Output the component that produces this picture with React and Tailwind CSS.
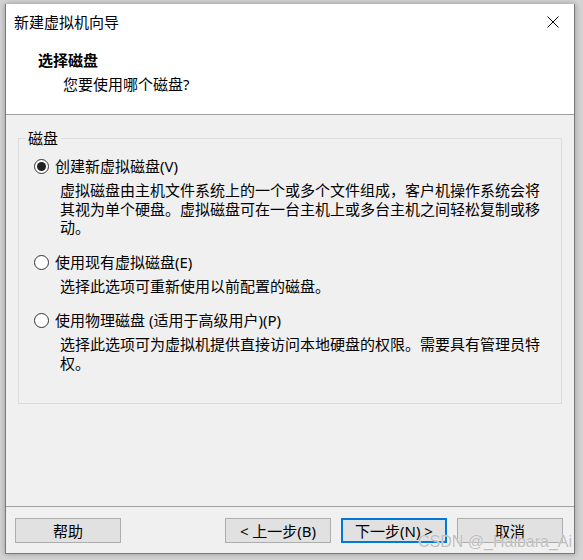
import React from "react";

const FONT = { fontFamily: "'Noto Sans', 'Noto Sans CJK SC', sans-serif" };

const Radio = ({ checked }) => (
    <span className="w-[15px] h-[15px] rounded-full border border-[#333333] bg-white flex items-center justify-center flex-shrink-0">
        {checked && <span className="w-[9px] h-[9px] rounded-full bg-[#222222]" />}
    </span>
);

const Option = ({ checked, label, desc }) => (
    <div className="flex flex-col">
        <div className="flex items-center h-[19px] leading-[19px]">
            <Radio checked={checked} />
            <span className="ml-[6px]">{label}</span>
        </div>
        <p className="pl-[26px] mt-[5px] w-[512px] leading-[18.5px]">{desc}</p>
    </div>
);

const Button = ({ children, focused }) => (
    <button
        className={
            focused
                ? "w-[106px] h-[25px] border-2 border-[#0078d7] bg-[#e1e1e1] text-[15px] leading-[20px] text-black"
                : "w-[106px] h-[25px] border border-[#adadad] bg-[#e1e1e1] text-[15px] leading-[20px] text-black"
        }
    >
        {children}
    </button>
);

export default function App() {
    return (
        <div className="w-[583px] h-[560px] bg-[#d4d4d4] pt-[4px] pl-[5px] relative overflow-hidden text-black" style={FONT}>
            {/* ── Dialog window ── */}
            <div className="w-[570px] h-[550px] border-x border-b border-[#7a7a7a] bg-[#f0f0f0] flex flex-col shadow-[0_0_6px_rgba(0,0,0,0.3)]">

                {/* Header */}
                <div className="h-[111px] bg-white border-b border-[#a0a0a0] flex flex-col flex-shrink-0">
                    <div className="h-[36px] flex items-center justify-between pl-[8px] pr-[15px]">
                        <span className="text-[15px] leading-[20px]">新建虚拟机向导</span>
                        <svg width="12" height="12" viewBox="0 0 12 12">
                            <path d="M0.5 0.5 L11.5 11.5 M11.5 0.5 L0.5 11.5" stroke="#000" strokeWidth="1" fill="none" />
                        </svg>
                    </div>
                    <p className="pl-[32px] mt-[10px] text-[15px] leading-[20px] font-bold">选择磁盘</p>
                    <p className="pl-[57px] mt-[4px] text-[15px] leading-[20px]">您要使用哪个磁盘?</p>
                </div>

                {/* Body */}
                <div className="h-[392px] border-b border-[#a0a0a0] flex-shrink-0 pt-[23px]">
                    <div className="mx-[12px] h-[266px] border border-[#dcdcdc] relative text-[15px]">
                        <span className="absolute left-[6px] top-[-11px] px-[3px] bg-[#f0f0f0] leading-[20px]">磁盘</span>
                        <div className="pl-[15px] pt-[18px] flex flex-col gap-[16px]">
                            <Option
                                checked
                                label="创建新虚拟磁盘(V)"
                                desc="虚拟磁盘由主机文件系统上的一个或多个文件组成，客户机操作系统会将其视为单个硬盘。虚拟磁盘可在一台主机上或多台主机之间轻松复制或移动。"
                            />
                            <Option
                                label="使用现有虚拟磁盘(E)"
                                desc="选择此选项可重新使用以前配置的磁盘。"
                            />
                            <Option
                                label="使用物理磁盘 (适用于高级用户)(P)"
                                desc="选择此选项可为虚拟机提供直接访问本地硬盘的权限。需要具有管理员特权。"
                            />
                        </div>
                    </div>
                </div>

                {/* Footer buttons */}
                <div className="h-[46px] pt-[11px] pl-[9px] pr-[11px] flex items-start justify-between flex-shrink-0">
                    <Button>帮助</Button>
                    <div className="flex gap-[10px]">
                        <Button>&lt; 上一步(B)</Button>
                        <Button focused>下一步(N) &gt;</Button>
                        <Button>取消</Button>
                    </div>
                </div>
            </div>

            {/* watermark */}
            <span
                className="absolute left-[418px] top-[532px] text-[16px] leading-[20px] text-[#bdbdbd] [text-shadow:0_0_1px_#ffffff]"
                style={{ fontFamily: "'Liberation Sans', Arial, sans-serif" }}
            >
                CSDN @_Haibara_Ai
            </span>
        </div>
    );
}
